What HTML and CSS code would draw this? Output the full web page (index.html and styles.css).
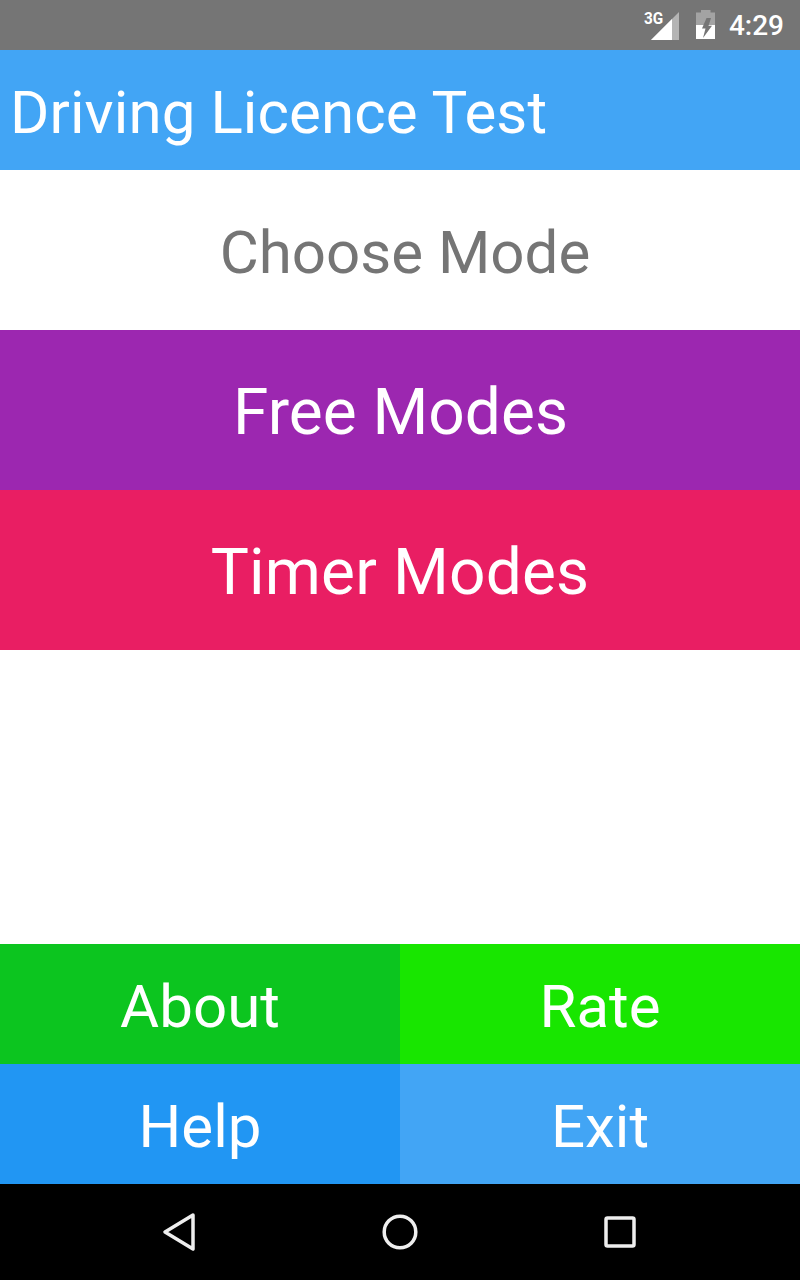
FILE: index.html
```html
<!DOCTYPE html>
<html>
<head>
    <title>Driving Licence Test</title>
    <link rel="stylesheet" href="styles.css">
</head>
<body>
    <div class="status-bar">
        <span class="net-type">3G</span>
        <svg class="signal" width="30" height="30" viewBox="0 0 30 30">
            <polygon points="1,29 29,1 29,29" fill="#b4b4b4"/>
            <polygon points="1,29 22,8 22,29" fill="#fff"/>
        </svg>
        <svg class="battery" width="20" height="30" viewBox="0 0 20 30">
            <path d="M5 0h9.500v2.500H19V29H0V2.500h5z" fill="#a3a3a3"/>
            <path d="M0 15h19v14H0z" fill="#fff"/>
            <path d="M10.500 8H15l-2.500 7.700h3.500L7 28l2.500-9.500H6z" fill="#757575"/>
        </svg>
        <span class="clock">4:29</span>
    </div>

    <div class="app-bar">Driving Licence Test</div>

    <div class="main">
        <div class="row mode-title">Choose Mode</div>
        <div class="row free-modes">Free Modes</div>
        <div class="row timer-modes">Timer Modes</div>
    </div>

    <div class="bottom-grid">
        <div class="cell about">About</div>
        <div class="cell rate">Rate</div>
        <div class="cell help">Help</div>
        <div class="cell exit">Exit</div>
    </div>

    <div class="nav-bar">
        <svg width="34" height="40" viewBox="0 0 34 40">
            <path d="M31 3L3 20l28 17z" fill="none" stroke="#eee" stroke-width="3.500" stroke-linejoin="round"/>
        </svg>
        <svg width="36" height="36" viewBox="0 0 36 36">
            <circle cx="18" cy="18" r="15.800" fill="none" stroke="#eee" stroke-width="3.500"/>
        </svg>
        <svg width="32" height="32" viewBox="0 0 32 32">
            <rect x="2" y="2" width="28" height="28" rx="1.500" fill="none" stroke="#eee" stroke-width="3.500"/>
        </svg>
    </div>
</body>
</html>
```

FILE: styles.css
```css
body {
    font-family: 'Roboto', sans-serif;
    background-color: white;
    margin: 0;
    width: 800px;
    height: 1280px;
    display: flex;
    flex-direction: column;
    overflow: hidden;
}

/* status bar */
.status-bar {
    height: 50px;
    background-color: #757575;
    color: white;
    display: flex;
    align-items: center;
    justify-content: flex-end;
    padding-right: 16px;
    box-sizing: border-box;
    position: relative;
}

.net-type {
    position: absolute;
    left: 644px;
    top: 9px;
    font-size: 17px;
    font-weight: 700;
    line-height: 18px;
    transform: scaleX(0.9);
    transform-origin: left;
}

.signal {
    margin-right: 16px;
    margin-top: 1px;
}

.battery {
    margin-right: 13px;
}

.clock {
    font-size: 28px;
    font-weight: 500;
}

/* app bar */
.app-bar {
    height: 120px;
    background-color: #42a5f5;
    color: white;
    font-size: 60px;
    letter-spacing: 0.1px;
    line-height: 126px;
    padding-left: 10px;
    flex-shrink: 0;
}

/* mode list */
.main {
    flex: 1;
}

.row {
    height: 160px;
    display: flex;
    align-items: center;
    justify-content: center;
    font-size: 64px;
    color: white;
    padding-top: 4px;
    box-sizing: border-box;
}

.mode-title {
    color: #757575;
    font-size: 60px;
    padding-left: 10px;
}

.free-modes {
    background-color: #9c27b0;
    padding-left: 1px;
}

.timer-modes {
    background-color: #e91e63;
    letter-spacing: 0.15px;
}

/* bottom buttons */
.bottom-grid {
    display: grid;
    grid-template-columns: 1fr 1fr;
    grid-template-rows: 120px 120px;
}

.cell {
    display: flex;
    align-items: center;
    justify-content: center;
    font-size: 60px;
    color: white;
    padding-top: 4px;
    box-sizing: border-box;
}

.about {
    background-color: #0cc51f;
}

.rate {
    background-color: #18e600;
}

.help {
    background-color: #2196f3;
}

.exit {
    background-color: #42a5f5;
}

/* navigation bar */
.nav-bar {
    height: 96px;
    background-color: black;
    display: flex;
    align-items: center;
    justify-content: space-between;
    padding: 0 164px 0 162px;
    box-sizing: border-box;
}
```
